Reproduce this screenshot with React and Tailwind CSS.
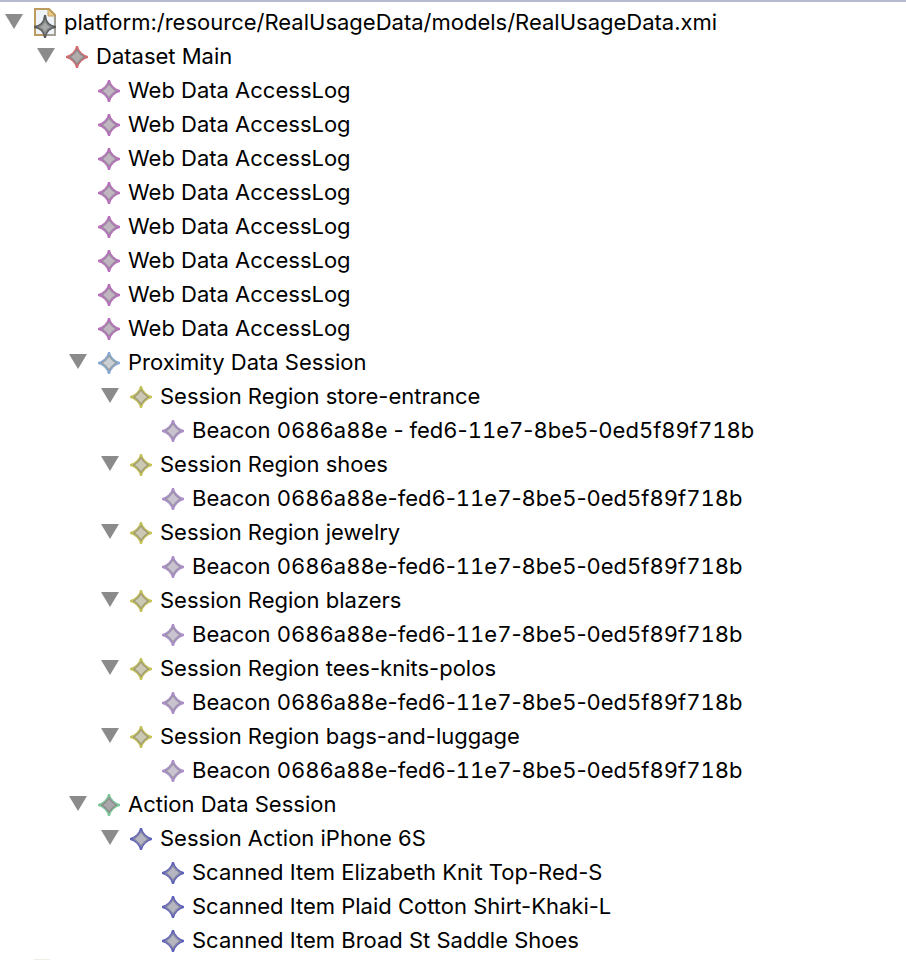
import { Fragment, useState } from "react";

const beacon = { label: "Beacon", id: "0686a88e-fed6-11e7-8be5-0ed5f89f718b", icon: "beacon" };

const region = (name, child = beacon) => ({
  label: `Session Region ${name}`,
  icon: "region",
  children: [child],
});

const tree = {
  label: "platform:/resource/RealUsageData/models/RealUsageData.xmi",
  icon: "file",
  children: [
    {
      label: "Dataset Main",
      icon: "dataset",
      children: [
        ...Array.from({ length: 8 }, () => ({ label: "Web Data AccessLog", icon: "web" })),
        {
          label: "Proximity Data Session",
          icon: "proximity",
          children: [
            region("store-entrance", {
              label: "Beacon",
              id: "0686a88e - fed6-11e7-8be5-0ed5f89f718b",
              icon: "beacon",
            }),
            region("shoes"),
            region("jewelry"),
            region("blazers"),
            region("tees-knits-polos"),
            region("bags-and-luggage"),
          ],
        },
        {
          label: "Action Data Session",
          icon: "action",
          children: [
            {
              label: "Session Action iPhone 6S",
              icon: "item",
              children: [
                { label: "Scanned Item Elizabeth Knit Top-Red-S", icon: "item" },
                { label: "Scanned Item Plaid Cotton Shirt-Khaki-L", icon: "item" },
                { label: "Scanned Item Broad St Saddle Shoes", icon: "item" },
              ],
            },
          ],
        },
      ],
    },
  ],
};

// edge: spikes and rim, ring: band inside the rim, fill: middle
const palette = {
  dataset: { edge: "#d46c70", ring: "#8f8888", fill: "#b0acac" },
  web: { edge: "#b870bd", ring: "#a088a2", fill: "#c0b6c2" },
  proximity: { edge: "#88abd4", ring: "#979da4", fill: "#cbd0d4" },
  region: { edge: "#c6c25c", ring: "#a09c74", fill: "#cbc8b4" },
  beacon: { edge: "#ab90ca", ring: "#9d93ab", fill: "#c9c3cf" },
  action: { edge: "#7fc99b", ring: "#8b8d8b", fill: "#a9a7a9" },
  item: { edge: "#5f62b8", ring: "#8788a5", fill: "#b6b6c0" },
};

function Star({ edge, ring, fill }) {
  return (
    <>
      <path
        d="M10 0H12L13.2 3.5L15.5 6.5L18.5 8.8L22 10V12L18.5 13.2L15.5 15.5L13.2 18.5L12 22H10L8.8 18.5L6.5 15.5L3.5 13.2L0 12V10L3.5 8.8L6.5 6.5L8.8 3.5Z"
        fill={edge}
      />
      <path
        d="M11 2.5L12.7 5L14.8 7.2L17 9.3L19.5 11L17 12.7L14.8 14.8L12.7 17L11 19.5L9.3 17L7.2 14.8L5 12.7L2.5 11L5 9.3L7.2 7.2L9.3 5Z"
        fill={ring}
      />
      <path d="M11 5L13.7 8.3L17 11L13.7 13.7L11 17L8.3 13.7L5 11L8.3 8.3Z" fill={fill} />
    </>
  );
}

function NodeIcon({ kind }) {
  if (kind === "file") {
    return (
      <svg className="mt-[2px] h-[30px] w-[22px] shrink-0" viewBox="0 0 22 30" aria-hidden="true">
        <path d="M1 1H15L21 7V27H1Z" fill="#eef3fa" stroke="#bb9c5e" strokeWidth="2" />
        <path d="M21 8V27H12" fill="none" stroke="#a39f94" strokeWidth="2" />
        <path d="M14 1V8H21Z" fill="#ecc987" stroke="#c3a266" strokeWidth="1" />
        <path d="M10 7H12L13 12L15 15L18 17L22 18V20L18 21L15 23L13 26L12 30H10L9 26L7 23L4 21L0 20V18L4 17L7 15L9 12Z" fill="#585a5c" />
        <path d="M11 11L14 16L19 19L14 22L11 27L8 22L3 19L8 16Z" fill="#828384" />
        <path d="M11 14L13 17L16 19L13 21L11 24L9 21L6 19L9 17Z" fill="#a9a8a8" />
      </svg>
    );
  }
  return (
    <svg className="mt-[2px] size-[22px] shrink-0" viewBox="0 0 22 22" aria-hidden="true">
      <Star {...palette[kind]} />
    </svg>
  );
}

// Equal-width digits in each group, normal hyphens between the groups
function Identifier({ value }) {
  return value.split("-").map((group, index) => (
    <Fragment key={index}>
      {index > 0 && "-"}
      <span className="tabular-nums">{group}</span>
    </Fragment>
  ));
}

function TreeNode({ node }) {
  const [open, setOpen] = useState(true);
  const hasChildren = Boolean(node.children);

  return (
    <li role="treeitem" aria-expanded={hasChildren ? open : undefined}>
      <div className="flex h-[34px] items-center">
        <div className="flex w-[29px] shrink-0">
          {hasChildren && (
            <button
              type="button"
              aria-label={`Toggle ${node.label}`}
              onClick={() => setOpen(!open)}
              className="flex h-[34px] w-[18px] items-center justify-center pb-[2px]"
            >
              <svg
                className={open ? "h-[15px] w-[18px]" : "h-[15px] w-[18px] -rotate-90"}
                viewBox="0 0 18 15"
                aria-hidden="true"
              >
                <path d="M0 0H18L9 15Z" fill="#8b8b8b" />
              </svg>
            </button>
          )}
        </div>
        <NodeIcon kind={node.icon} />
        <span className="ml-2 whitespace-nowrap">
          {node.label}
          {node.id && (
            <>
              {" "}
              <Identifier value={node.id} />
            </>
          )}
        </span>
      </div>
      {hasChildren && open && (
        <ul role="group" className="pl-8">
          {node.children.map((child, index) => (
            <TreeNode key={index} node={child} />
          ))}
        </ul>
      )}
    </li>
  );
}

export default function App() {
  return (
    <main className="h-screen overflow-hidden border-t-2 border-[#b8bbd0] bg-white pt-[3px] pl-[5px] font-['Inter','Liberation_Sans',sans-serif] text-[22px] leading-[34px] text-black">
      <ul role="tree" aria-label="Model resources">
        <TreeNode node={tree} />
      </ul>
      {/* top edge of the next resource's icon */}
      <div className="mt-[2px] ml-[29px] h-px w-4 bg-[#f0eee5]" />
    </main>
  );
}
